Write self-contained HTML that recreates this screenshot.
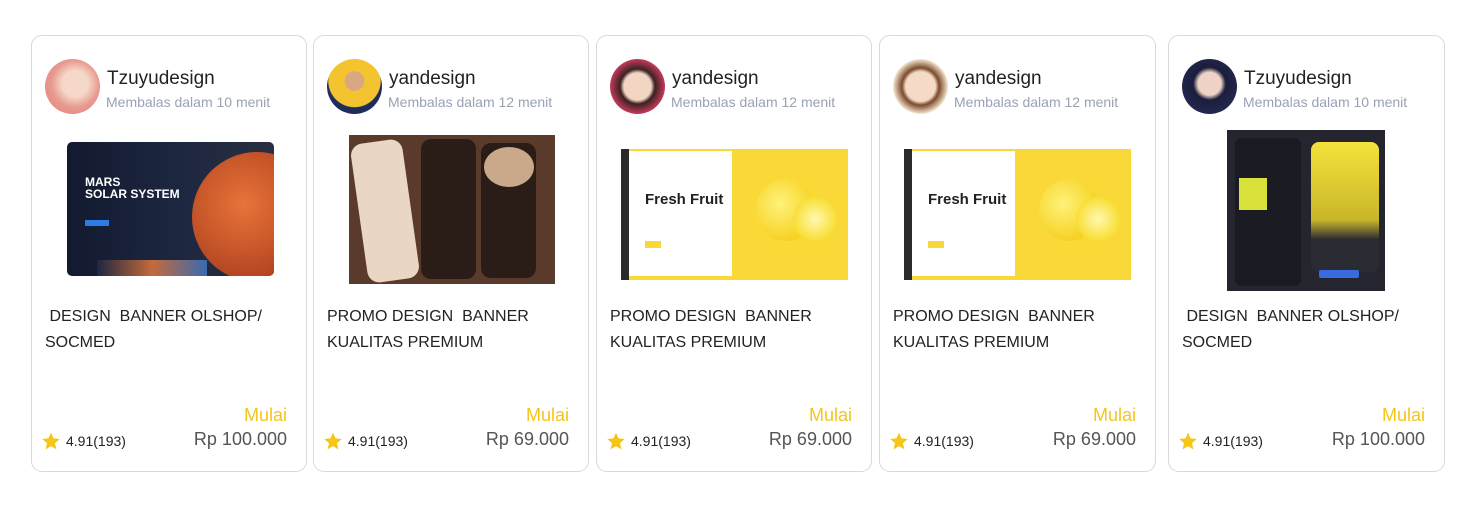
<!DOCTYPE html>
<html><head><meta charset="utf-8"><style>
body{margin:0;width:1477px;height:509px;background:#fff;font-family:"Liberation Sans",sans-serif;position:relative;overflow:hidden}
.c{position:absolute;top:35px;height:435px;width:274px;border:1px solid #d9d9d9;border-radius:11px;box-sizing:content-box}
.av{position:absolute;left:13px;top:23px;width:55px;height:55px;border-radius:50%}
.nm{position:absolute;left:75px;top:32px;font-size:19px;color:#222}
.sb{position:absolute;left:74px;top:58px;font-size:14px;color:#98a2b3}
.im{position:absolute}
.t{position:absolute;left:13px;top:268px;font-size:16px;line-height:26px;color:#222;width:250px}
.mu{position:absolute;right:19px;top:369px;font-size:18px;color:#f5c518}
.pr{position:absolute;right:19px;top:393px;font-size:18px;color:#555}
.st{position:absolute;left:9px;top:395px;width:20px;height:20px}
.rt{position:absolute;left:34px;top:397px;font-size:14px;color:#222}
</style></head><body>

<div class="c" style="left:31px">
<div class="av" style="background:radial-gradient(circle at 55% 45%,#f6d8c8 0 30%,#e89a90 55%,#e27f7a)"></div>
<div class="nm">Tzuyudesign</div><div class="sb">Membalas dalam 10 menit</div>
<div class="im" style="left:35px;top:106px;width:207px;height:134px;border-radius:5px;background:linear-gradient(90deg,#121a30 0,#1d2740 55%,#2a2f40 100%);overflow:hidden">
<div style="position:absolute;left:125px;top:10px;width:130px;height:130px;border-radius:50%;background:radial-gradient(circle at 40% 40%,#e8743a,#b2431f 70%)"></div>
<div style="position:absolute;left:18px;top:34px;color:#fff;font-size:12px;font-weight:bold;line-height:12px">MARS<br>SOLAR SYSTEM</div>
<div style="position:absolute;left:18px;top:78px;width:24px;height:6px;background:#2a7de1"></div>
<div style="position:absolute;left:30px;top:118px;width:110px;height:16px;background:linear-gradient(90deg,#1d2740,#c46a3a,#3a6ab0)"></div>
</div>
<div class="t">&nbsp;DESIGN &nbsp;BANNER OLSHOP/ SOCMED</div>
<div class="mu">Mulai</div><div class="pr">Rp 100.000</div>
<svg class="st" viewBox="0 0 24 24"><path d="M12 2l3 6.9 7.5.7-5.7 5 1.7 7.4L12 18.1 5.5 22l1.7-7.4-5.7-5 7.5-.7z" fill="#f5c518"/></svg><div class="rt">4.91(193)</div>
</div>

<div class="c" style="left:313px">
<div class="av" style="background:radial-gradient(circle at 50% 40%,#d9a880 0 22%,#f4c430 24% 60%,#1f2d5a 62%)"></div>
<div class="nm">yandesign</div><div class="sb">Membalas dalam 12 menit</div>
<div class="im" style="left:35px;top:99px;width:206px;height:149px;background:#5a3a2a;overflow:hidden">
<div style="position:absolute;left:10px;top:6px;width:52px;height:140px;border-radius:12px;background:#e9d7c4;transform:rotate(-8deg)"></div>
<div style="position:absolute;left:72px;top:4px;width:55px;height:140px;border-radius:10px;background:#2a1d17"></div>
<div style="position:absolute;left:132px;top:8px;width:55px;height:135px;border-radius:10px;background:#2a1d17"></div>
<div style="position:absolute;left:135px;top:12px;width:50px;height:40px;border-radius:50%;background:#c9a98a"></div>
</div>
<div class="t">PROMO DESIGN &nbsp;BANNER KUALITAS PREMIUM</div>
<div class="mu">Mulai</div><div class="pr">Rp 69.000</div>
<svg class="st" viewBox="0 0 24 24"><path d="M12 2l3 6.9 7.5.7-5.7 5 1.7 7.4L12 18.1 5.5 22l1.7-7.4-5.7-5 7.5-.7z" fill="#f5c518"/></svg><div class="rt">4.91(193)</div>
</div>

<div class="c" style="left:596px">
<div class="av" style="background:radial-gradient(circle at 50% 50%,#f3d5c3 0 35%,#3a2222 45%,#c23a5a 70%,#eee)"></div>
<div class="nm">yandesign</div><div class="sb">Membalas dalam 12 menit</div>
<div class="im" style="left:24px;top:113px;width:227px;height:131px;background:#f9d838;overflow:hidden">
<div style="position:absolute;left:0;top:0;width:8px;height:131px;background:#2a2a2a"></div>
<div style="position:absolute;left:8px;top:2px;width:103px;height:125px;background:#fff"></div>
<div style="position:absolute;left:24px;top:42px;font-size:15px;font-weight:bold;color:#222">Fresh Fruit</div>
<div style="position:absolute;left:24px;top:92px;width:16px;height:7px;background:#f9d838"></div>
<div style="position:absolute;left:135px;top:30px;width:60px;height:62px;border-radius:50%;background:radial-gradient(circle at 40% 40%,#fff27a,#f2c500)"></div>
<div style="position:absolute;left:172px;top:48px;width:44px;height:44px;border-radius:50%;background:radial-gradient(#fff8b0,#f5d400)"></div>
</div>
<div class="t">PROMO DESIGN &nbsp;BANNER KUALITAS PREMIUM</div>
<div class="mu">Mulai</div><div class="pr">Rp 69.000</div>
<svg class="st" viewBox="0 0 24 24"><path d="M12 2l3 6.9 7.5.7-5.7 5 1.7 7.4L12 18.1 5.5 22l1.7-7.4-5.7-5 7.5-.7z" fill="#f5c518"/></svg><div class="rt">4.91(193)</div>
</div>

<div class="c" style="left:879px;width:275px">
<div class="av" style="background:radial-gradient(circle at 50% 50%,#f6dac8 0 38%,#7a4a2a 48%,#f3e3cf 70%)"></div>
<div class="nm">yandesign</div><div class="sb">Membalas dalam 12 menit</div>
<div class="im" style="left:24px;top:113px;width:227px;height:131px;background:#f9d838;overflow:hidden">
<div style="position:absolute;left:0;top:0;width:8px;height:131px;background:#2a2a2a"></div>
<div style="position:absolute;left:8px;top:2px;width:103px;height:125px;background:#fff"></div>
<div style="position:absolute;left:24px;top:42px;font-size:15px;font-weight:bold;color:#222">Fresh Fruit</div>
<div style="position:absolute;left:24px;top:92px;width:16px;height:7px;background:#f9d838"></div>
<div style="position:absolute;left:135px;top:30px;width:60px;height:62px;border-radius:50%;background:radial-gradient(circle at 40% 40%,#fff27a,#f2c500)"></div>
<div style="position:absolute;left:172px;top:48px;width:44px;height:44px;border-radius:50%;background:radial-gradient(#fff8b0,#f5d400)"></div>
</div>
<div class="t">PROMO DESIGN &nbsp;BANNER KUALITAS PREMIUM</div>
<div class="mu">Mulai</div><div class="pr">Rp 69.000</div>
<svg class="st" viewBox="0 0 24 24"><path d="M12 2l3 6.9 7.5.7-5.7 5 1.7 7.4L12 18.1 5.5 22l1.7-7.4-5.7-5 7.5-.7z" fill="#f5c518"/></svg><div class="rt">4.91(193)</div>
</div>

<div class="c" style="left:1168px;width:275px">
<div class="av" style="background:radial-gradient(circle at 50% 45%,#eed3c6 0 28%,#1a1d3a 40%,#2d3160)"></div>
<div class="nm">Tzuyudesign</div><div class="sb">Membalas dalam 10 menit</div>
<div class="im" style="left:58px;top:94px;width:158px;height:161px;background:#24252e;overflow:hidden">
<div style="position:absolute;left:8px;top:8px;width:66px;height:148px;border-radius:6px;background:#1a1b22"></div>
<div style="position:absolute;left:12px;top:48px;width:28px;height:32px;background:#d8e03a"></div>
<div style="position:absolute;left:84px;top:12px;width:68px;height:130px;border-radius:8px;background:linear-gradient(#f4e23a,#c8b62a 60%,#2a2b33 75%)"></div>
<div style="position:absolute;left:92px;top:140px;width:40px;height:8px;background:#3a6ae0;border-radius:2px"></div>
</div>
<div class="t">&nbsp;DESIGN &nbsp;BANNER OLSHOP/ SOCMED</div>
<div class="mu">Mulai</div><div class="pr">Rp 100.000</div>
<svg class="st" viewBox="0 0 24 24"><path d="M12 2l3 6.9 7.5.7-5.7 5 1.7 7.4L12 18.1 5.5 22l1.7-7.4-5.7-5 7.5-.7z" fill="#f5c518"/></svg><div class="rt">4.91(193)</div>
</div>

</body></html>
